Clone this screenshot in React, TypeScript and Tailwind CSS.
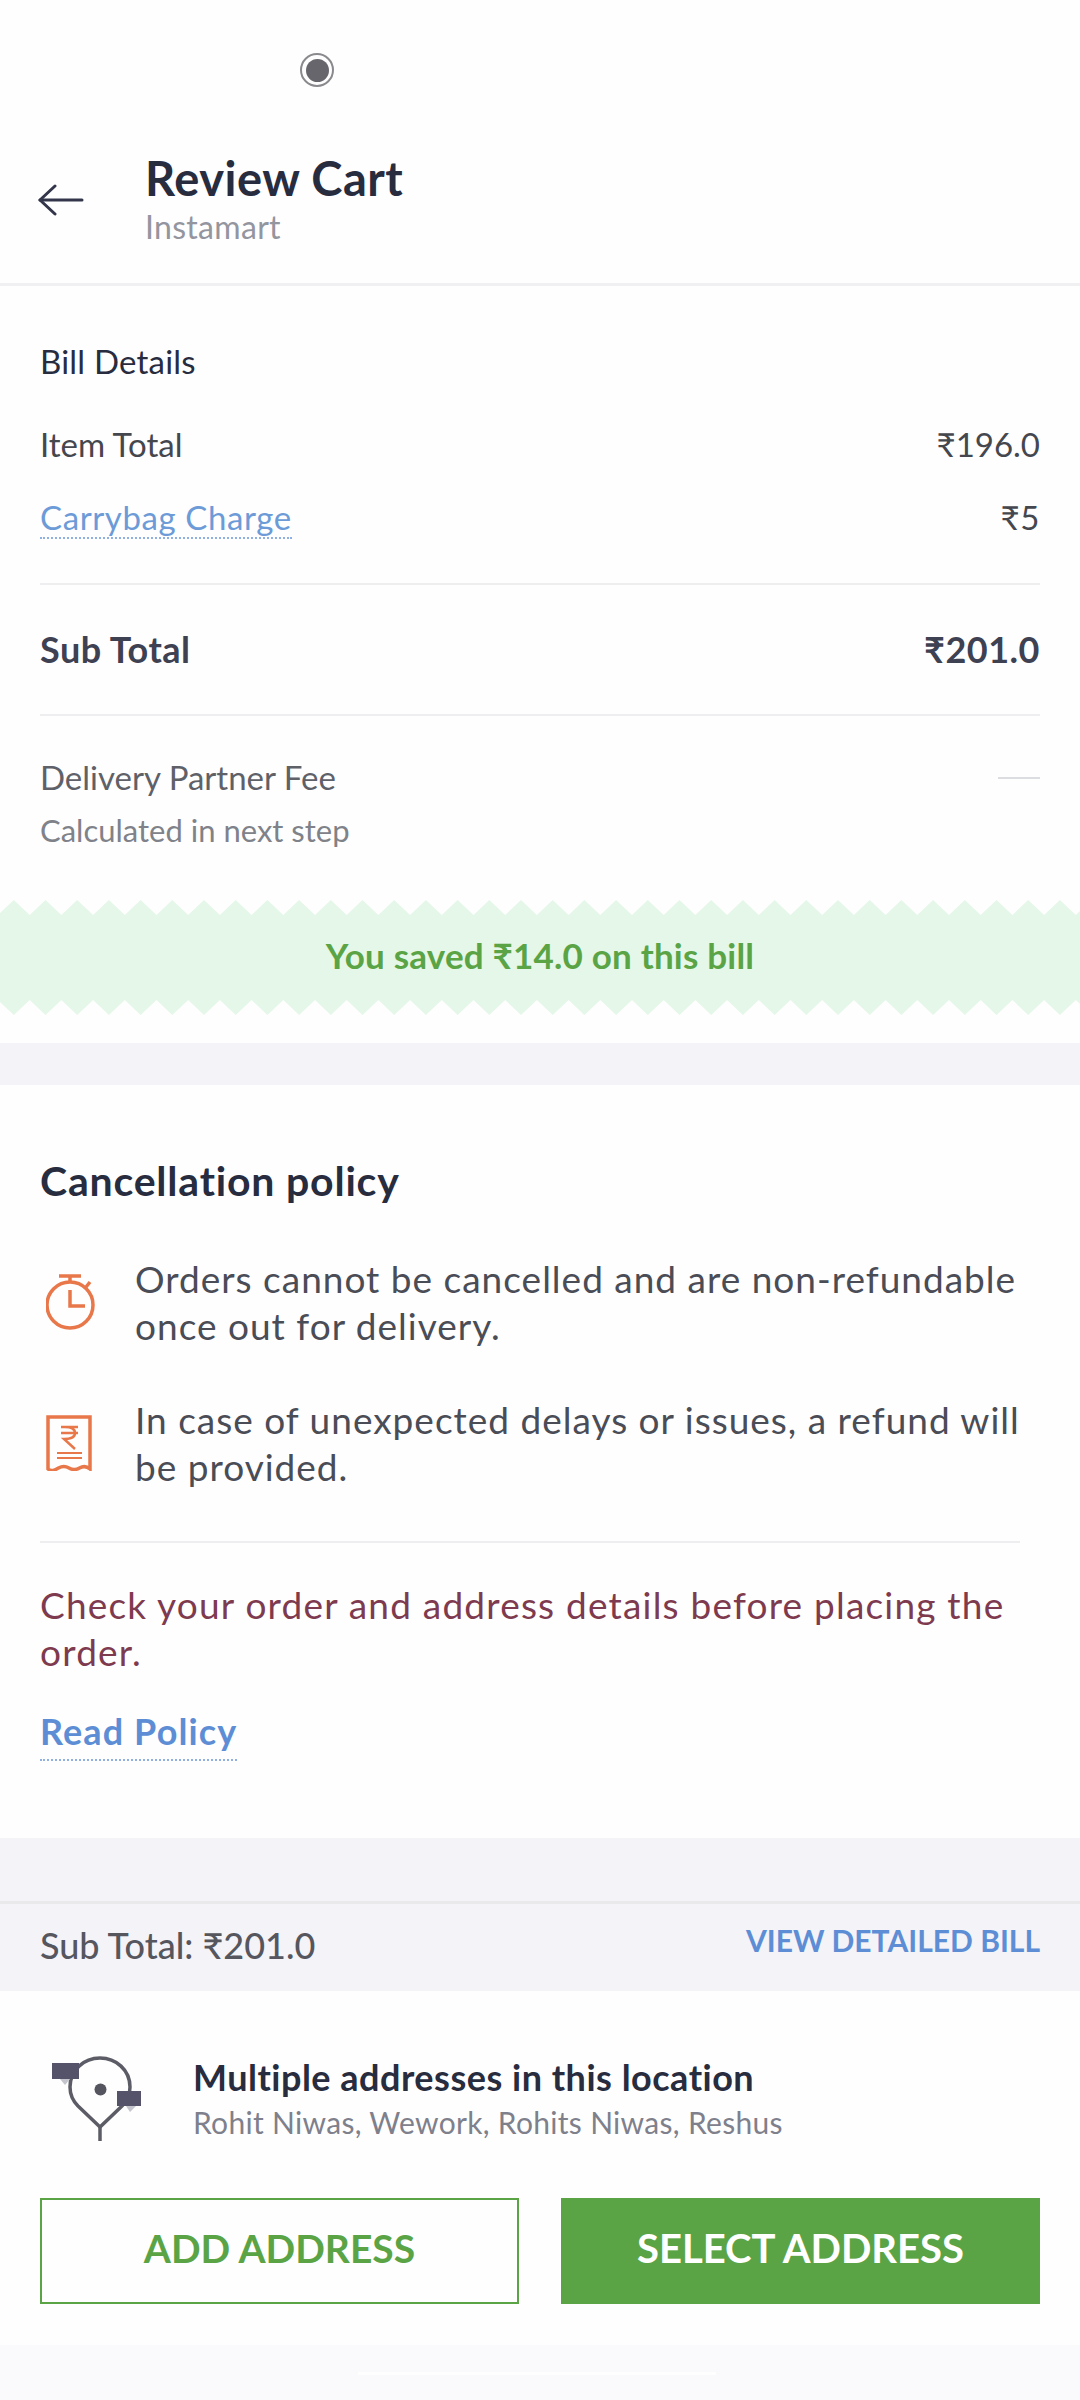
const teeth = Array.from({ length: 35 }, (_, i) => i);

function Zigzag({ flip }: { flip?: boolean }) {
  const points = teeth.map((i) => `${i * 31.7 - 2},15 ${i * 31.7 + 13.8},0`).join(' ');
  return (
    <svg
      viewBox="0 0 1080 15"
      className={`block w-full h-[15px] ${flip ? '-scale-y-100' : ''}`}
    >
      <polygon points={`${points} 1110,15`} fill="#e5f7e8" />
    </svg>
  );
}

function BackArrow() {
  return (
    <svg width="46" height="32" viewBox="0 0 46 32" fill="none" stroke="#33364a" strokeWidth="3" strokeLinecap="round" strokeLinejoin="round">
      <path d="M2 16H44" />
      <path d="M17 2 2 16l15 14" />
    </svg>
  );
}

function TimerIcon() {
  return (
    <svg width="50" height="56" viewBox="0 0 50 56" fill="none" stroke="#e8774a" strokeWidth="3.500">
      <path d="M13 2h22M24 2v7" />
      <circle cx="24" cy="31" r="23" />
      <path d="M24 16v16h15" />
      <path d="m40 13 4-5" />
    </svg>
  );
}

function ReceiptIcon() {
  return (
    <svg width="46" height="56" viewBox="0 0 46 56" fill="none" stroke="#e8774a" strokeWidth="3.500">
      <path d="M2 2h42v52c-3.500-3-7-3-10.500-1s-7 2-10.500 0-7-2-10.500 0S5.500 57 2 54z" />
      <path d="M15 12h17M15 18h17M19 12c8 0 10 3 10 6s-3 6-11 6l11 10" strokeWidth="2.500" />
      <path d="M11 38h25M11 43h25" strokeWidth="2" />
    </svg>
  );
}

function AddressIcon() {
  return (
    <svg width="90" height="86" viewBox="0 0 90 86" fill="none">
      <path d="M48 71 26 50C20 44 18 38 18 31 18 14 32 2 48 2s30 12 30 29c0 7-2 13-8 19z" stroke="#5c5c66" strokeWidth="3.500" />
      <path d="M48 71v14" stroke="#5c5c66" strokeWidth="3.500" />
      <circle cx="48.500" cy="33.500" r="6" fill="#55555f" />
      <path d="M0 7h27v16H0z" fill="#55536a" />
      <path d="M8 23h10L13 29z" fill="#c4c4cc" />
      <path d="M65 35h24v15H65z" fill="#55536a" />
      <path d="M74 50h10l-6 6z" fill="#c4c4cc" />
    </svg>
  );
}

function BillRow({ label, value, className }: { label: React.ReactNode; value: React.ReactNode; className: string }) {
  return (
    <div className={`flex items-center justify-between ${className}`}>
      <div>{label}</div>
      <div>{value}</div>
    </div>
  );
}

export default function App() {
  return (
    <div className="w-[1080px] h-[2400px] overflow-hidden bg-[#fefefe] font-['Lato','Liberation_Sans',sans-serif]">
      {/* status */}
      <div className="h-[140px] pl-[300px] flex items-center">
        <div className="w-[34px] h-[34px] rounded-full border-2 border-[#8a8a8e] flex items-center justify-center">
          <div className="w-[23px] h-[23px] rounded-full bg-[#66666c]" />
        </div>
      </div>

      {/* header */}
      <div className="h-[146px] border-b-[3px] border-[#f0f0f3] flex">
        <div className="w-[145px] pl-[38px] pt-[44px]">
          <BackArrow />
        </div>
        <div>
          <div className="h-[76px] flex items-center text-[47px] tracking-[0.5px] font-bold text-[#282c3f]">Review Cart</div>
          <div className="h-[40px] -mt-[9px] flex items-center text-[32px] tracking-[0.3px] text-[#93959f]">Instamart</div>
        </div>
      </div>

      {/* bill */}
      <div className="px-10 h-[614px]">
        <div className="h-[155px] pt-[55px] text-[33px] leading-[40px] tracking-[0.2px] text-[#282c3f]">Bill Details</div>
        <BillRow label="Item Total" value="₹196.0" className="h-[40px] -mt-[16px] text-[33px] text-[#45474f]" />
        <BillRow
          label={<span className="border-b-2 border-dotted border-[#8fb0e0] text-[#6c9bd8]">Carrybag Charge</span>}
          value="₹5"
          className="h-[40px] mt-[33px] text-[33px] tracking-[0.6px] text-[#45474f]"
        />
        <div className="h-0.5 mt-[45px] bg-[#eeeef0]" />
        <BillRow label="Sub Total" value="₹201.0" className="h-[128px] text-[36px] tracking-[0.5px] font-bold text-[#3e4152]" />
        <div className="h-0.5 mt-px bg-[#eeeef0]" />
        <BillRow
          label="Delivery Partner Fee"
          value={<div className="w-[42px] h-0.5 bg-[#dcdde0]" />}
          className="h-[40px] mt-[42px] text-[33px] text-[#5f6169]"
        />
        <div className="mt-[12px] text-[31px] leading-[40px] text-[#808289]">Calculated in next step</div>
      </div>

      {/* savings */}
      <Zigzag />
      <div className="h-[85px] bg-[#e5f7e8] flex items-center justify-center pb-[4px] text-[35px] tracking-[0.2px] font-bold text-[#5aa446]">
        You saved ₹14.0 on this bill
      </div>
      <Zigzag flip />

      <div className="h-[42px] mt-[28px] bg-[#f4f3f8]" />

      {/* policy */}
      <div className="px-10 h-[753px]">
        <div className="pt-[71px] text-[41px] leading-[50px] tracking-[0.8px] font-bold text-[#282c3f]">Cancellation policy</div>
        <div className="flex items-center gap-[47px] mt-[49px]">
          <div className="w-[48px] pl-[6px]"><TimerIcon /></div>
          <div className="text-[37px] leading-[47px] tracking-[1px] text-[#4a4c56]">
            Orders cannot be cancelled and are non-refundable
            <br />
            once out for delivery.
          </div>
        </div>
        <div className="flex items-center gap-[47px] mt-[47px]">
          <div className="w-[48px] pl-[6px]"><ReceiptIcon /></div>
          <div className="text-[37px] leading-[47px] tracking-[1px] text-[#4a4c56]">
            In case of unexpected delays or issues, a refund will
            <br />
            be provided.
          </div>
        </div>
        <div className="h-0.5 w-[980px] mt-[51px] bg-[#eeeef0]" />
        <div className="mt-[38px] text-[37px] leading-[47px] tracking-[1.2px] text-[#7e3a4e]">
          Check your order and address details before placing the
          <br />
          order.
        </div>
        <div className="mt-[36px]">
          <span className="inline-block h-[50px] leading-[40px] border-b-2 border-dotted border-[#8fb0e0] text-[36px] tracking-[1.1px] font-bold text-[#5d8ed5]">
            Read Policy
          </span>
        </div>
      </div>

      {/* sub total bar */}
      <div className="h-[63px] bg-[#f4f3f8]" />
      <div className="h-[90px] px-10 bg-[#f4f3f8] border-t-[3px] border-[#e9e9ec] flex justify-between">
        <div className="pt-[19px] text-[36px] leading-[44px] font-medium text-[#55565e]">Sub Total: ₹201.0</div>
        <div className="pt-[14px] text-[30px] leading-[44px] font-bold text-[#5d8ed5]">VIEW DETAILED BILL</div>
      </div>

      {/* address */}
      <div className="h-[354px] px-10 pt-[65px]">
        <div className="flex">
          <div className="w-[153px] pl-[12px]"><AddressIcon /></div>
          <div>
            <div className="text-[36px] leading-[42px] tracking-[0.5px] font-bold text-[#282c3f]">Multiple addresses in this location</div>
            <div className="mt-[3px] text-[30px] leading-[42px] tracking-[0.3px] text-[#7e808c]">Rohit Niwas, Wework, Rohits Niwas, Reshus</div>
          </div>
        </div>
        <div className="flex justify-between mt-[55px]">
          <div className="w-[479px] h-[106px] pb-[6px] border-2 border-[#5aa446] flex items-center justify-center text-[39px] font-bold text-[#5aa446]">ADD ADDRESS</div>
          <div className="w-[479px] h-[106px] pb-[6px] bg-[#5aa446] flex items-center justify-center text-[40px] font-bold text-white">SELECT ADDRESS</div>
        </div>
      </div>

      {/* nav bar */}
      <div className="h-[55px] bg-[#fafafc] pt-[27px] pl-[358px]">
        <div className="w-[358px] h-[3px] bg-[#fefefe]" />
      </div>
    </div>
  );
}
